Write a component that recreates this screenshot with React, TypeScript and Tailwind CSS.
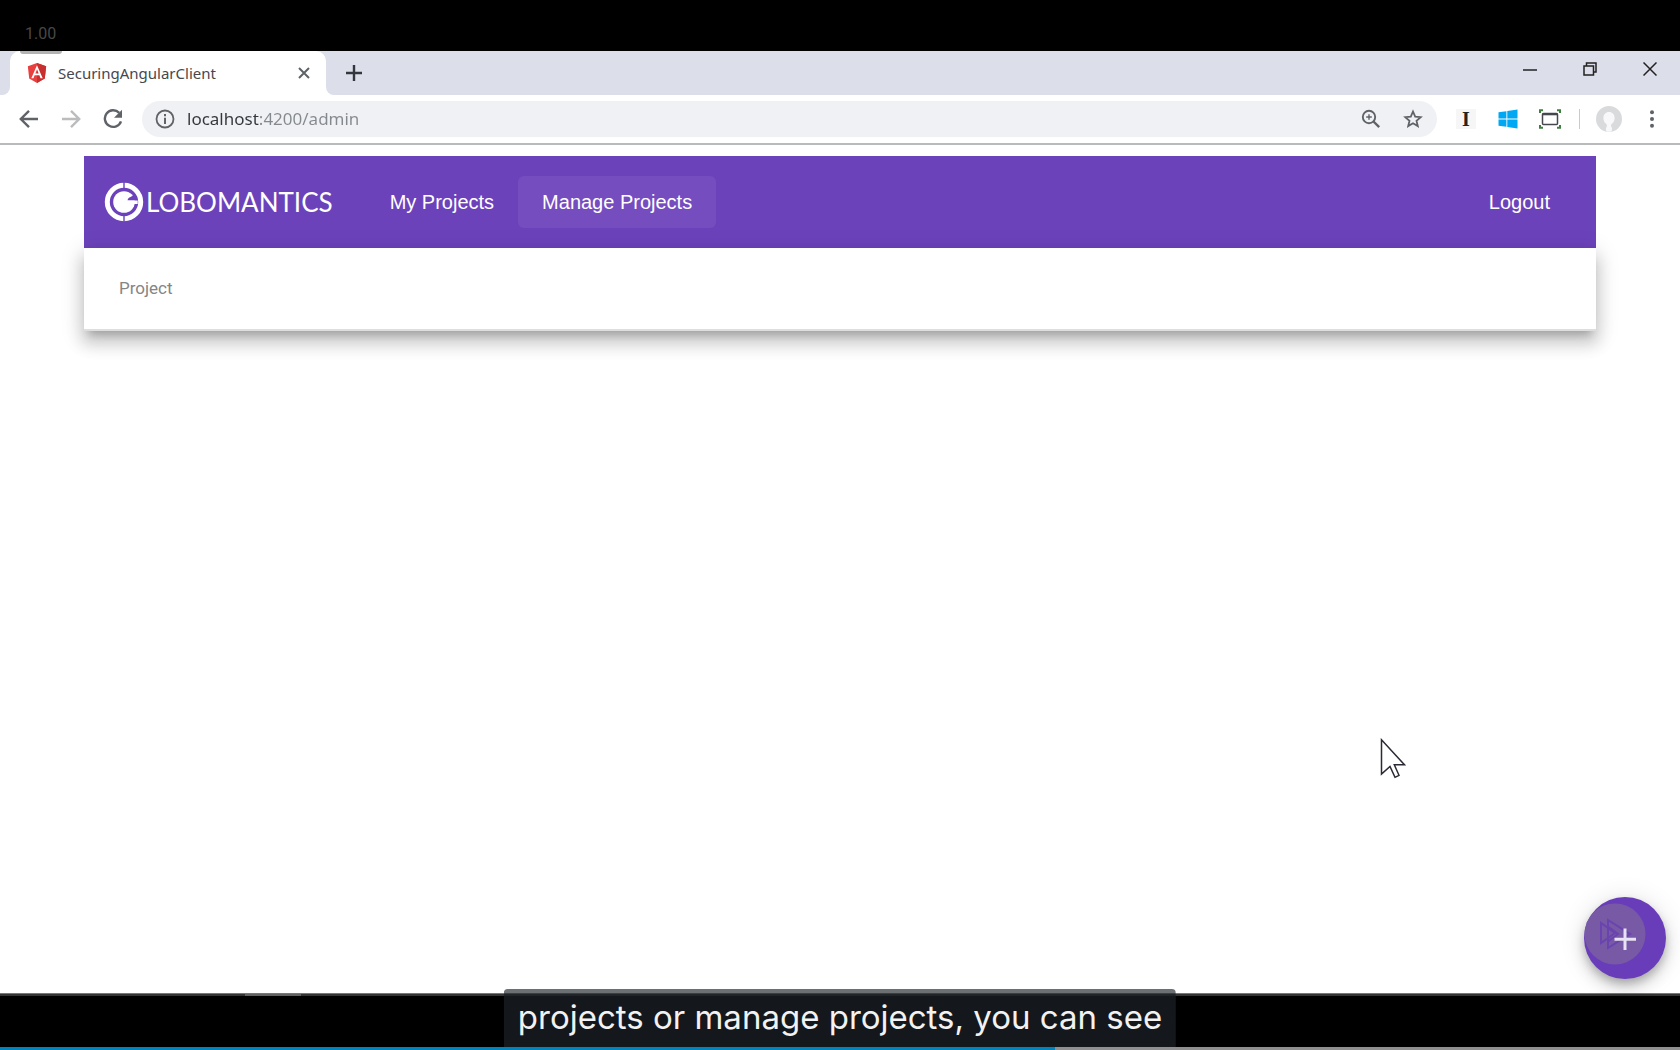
import React from "react";

function AngularLogo() {
  return (
    <svg viewBox="0 0 24 24" className="h-[22px] w-[22px]" aria-hidden="true">
      <path d="M12 1 22 4.600 20.500 18 12 23 3.500 18 2 4.600z" fill="#e8403f" />
      <path d="M12 1 22 4.600 20.500 18 12 23z" fill="#c8302f" />
      <path
        d="M12 3.600 5.800 17.600h2.400l1.200-3.100h5.200l1.200 3.100h2.400zM12 8l1.800 4.500h-3.600z"
        fill="#fff"
        fillRule="evenodd"
      />
    </svg>
  );
}

function BackIcon() {
  return (
    <svg viewBox="0 0 20 20" className="h-5 w-5" fill="none" stroke="currentColor" strokeWidth="2.400" aria-hidden="true">
      <path d="M19 10H2.500M10 1.800 1.800 10l8.200 8.200" />
    </svg>
  );
}

function ForwardIcon() {
  return (
    <svg viewBox="0 0 20 20" className="h-5 w-5" fill="none" stroke="currentColor" strokeWidth="2.400" aria-hidden="true">
      <path d="M1 10h16.500M10 1.800 18.200 10 10 18.200" />
    </svg>
  );
}

function ReloadIcon() {
  return (
    <svg viewBox="0 0 20 20" className="h-5 w-5" aria-hidden="true">
      <path
        d="M16.200 3.800A8.300 8.300 0 1 0 18 12.300"
        fill="none"
        stroke="currentColor"
        strokeWidth="2.400"
      />
      <path d="M19 0.800v8h-8z" fill="currentColor" />
    </svg>
  );
}

function InfoIcon() {
  return (
    <svg viewBox="0 0 20 20" className="h-5 w-5" aria-hidden="true">
      <circle cx="10" cy="10" r="8.500" fill="none" stroke="currentColor" strokeWidth="1.800" />
      <path d="M9 8.800h2V15H9zM9 5h2v2.200H9z" fill="currentColor" />
    </svg>
  );
}

function ZoomIcon() {
  return (
    <svg viewBox="0 0 20 20" className="h-5 w-5" fill="none" stroke="currentColor" aria-hidden="true">
      <circle cx="8" cy="8" r="6.200" strokeWidth="1.900" />
      <path d="m12.500 12.500 5.700 5.700" strokeWidth="2.400" />
      <path d="M8 5.200v5.600M5.200 8h5.600" strokeWidth="1.400" />
    </svg>
  );
}

function StarIcon() {
  return (
    <svg viewBox="0 0 20 20" className="h-5 w-5" fill="none" stroke="currentColor" strokeWidth="1.800" aria-hidden="true">
      <path d="m10 2.500 2.200 5.100 5.500.5-4.200 3.600 1.300 5.400L10 14.200l-4.800 2.900 1.300-5.400L2.300 8.100l5.500-.5z" />
    </svg>
  );
}

function WindowsIcon() {
  return (
    <svg viewBox="0 0 20 20" className="h-5 w-5" fill="#00a8f3" aria-hidden="true">
      <path d="M.5 3.300 8.400 2.200v7.300H.5zM9.300 2 19.500.5v9H9.300zM.5 10.400h7.900v7.400L.5 16.700zM9.300 10.400h10.200v9.100L9.300 18z" />
    </svg>
  );
}

function CaptureIcon() {
  return (
    <svg viewBox="0 0 22 20" className="h-5 w-[22px]" fill="none" aria-hidden="true">
      <path d="M1 4V1.200h3M18 1.200h3V4M21 16v2.800h-3M4 18.800H1V16" stroke="#3f7d41" strokeWidth="2" />
      <rect x="3.500" y="4.500" width="15" height="11" rx="1" stroke="#44474b" strokeWidth="1.500" />
      <path d="M3.500 5.200h15" stroke="#44474b" strokeWidth="2.200" />
    </svg>
  );
}

function AvatarIcon() {
  return (
    <svg viewBox="0 0 26 26" className="h-[26px] w-[26px]" aria-hidden="true">
      <circle cx="13" cy="13" r="13" fill="#d9dadc" />
      <path
        d="M13 6c3.400 0 5.600 2.500 5.600 6 0 3-1.300 4.700-3 6.100-.8.800-.7 2.300.1 3.400.8 1.200.2 4.300-1 4.300h-3.400c-1.200 0-1.800-3.100-1-4.300.8-1.100.9-2.600.1-3.400-1.700-1.400-3-3.100-3-6.100 0-3.500 2.200-6 5.600-6z"
        fill="#f8f8fb"
      />
    </svg>
  );
}

function GlobomanticsMark() {
  return (
    <svg viewBox="0 0 40 40" className="h-10 w-10" aria-hidden="true">
      <circle cx="20" cy="20" r="16.700" fill="none" stroke="#fff" strokeWidth="5" />
      <path d="M20 0v7M20 33v7" stroke="#6c42bb" strokeWidth="1.400" />
      <circle cx="20" cy="20" r="10.800" fill="#fff" />
      <path d="M33 18.500h-9.500c.3-1.700 1.300-2.900 3-3.400l2.500-1.600 3.500.5z" fill="#6c42bb" />
      <path d="M20 18.500h13.700v3.500H20z" fill="#fff" />
    </svg>
  );
}

function TabStrip() {
  return (
    <div className="flex h-11 bg-white">
      <div className="w-[10px] rounded-br-lg bg-[#dcdeea]" />
      <div className="relative flex w-[316px] bg-[#dcdeea]">
        <div className="flex flex-1 items-center rounded-t-[10px] bg-white pr-3 pl-4">
          <AngularLogo />
          <span className="ml-2.5 flex-1 text-[15px] text-[#45484d]">SecuringAngularClient</span>
          <button aria-label="Close tab" className="flex h-5 w-5 items-center justify-center text-[#5f6368]">
            <svg viewBox="0 0 12 12" className="h-3 w-3" stroke="currentColor" strokeWidth="2" aria-hidden="true">
              <path d="m1 1 10 10M11 1 1 11" />
            </svg>
          </button>
        </div>
        <div className="absolute top-0 left-2.5 h-[3px] w-[42px] rounded-b bg-[#b3b3b3]" />
      </div>
      <div className="flex flex-1 items-center rounded-bl-lg bg-[#dcdeea] text-[#33363b]">
        <button aria-label="New tab" className="ml-5 flex h-4 w-4 items-center justify-center">
          <svg viewBox="0 0 16 16" className="h-4 w-4" stroke="currentColor" strokeWidth="2.400" aria-hidden="true">
            <path d="M8 0v16M0 8h16" />
          </svg>
        </button>
        <div className="mb-2 ml-auto flex text-[#222]">
          <button aria-label="Minimize" className="flex h-8 w-[60px] items-center justify-center">
            <svg viewBox="0 0 14 14" className="h-3.5 w-3.5" stroke="currentColor" strokeWidth="1.500" aria-hidden="true">
              <path d="M0 8h14" />
            </svg>
          </button>
          <button aria-label="Restore" className="flex h-8 w-[60px] items-center justify-center">
            <svg viewBox="0 0 14 14" className="h-3.5 w-3.5" fill="none" stroke="currentColor" strokeWidth="1.500" aria-hidden="true">
              <path d="M1 4h9.500v9H1zM3.500 4V1H13v9h-2.500" />
            </svg>
          </button>
          <button aria-label="Close" className="flex h-8 w-[60px] items-center justify-center">
            <svg viewBox="0 0 14 14" className="h-3.5 w-3.5" stroke="currentColor" strokeWidth="1.500" aria-hidden="true">
              <path d="m.5.5 13 13M13.500.5l-13 13" />
            </svg>
          </button>
        </div>
      </div>
    </div>
  );
}

function Toolbar() {
  return (
    <div className="flex h-[50px] items-center border-b-2 border-[#b9babc] bg-white pr-[18px] pl-[19px] text-[#5f6368]">
      <div className="flex gap-[22px]">
        <button aria-label="Back"><BackIcon /></button>
        <button aria-label="Forward" className="text-[#babcbe]"><ForwardIcon /></button>
        <button aria-label="Reload"><ReloadIcon /></button>
      </div>
      <div className="ml-[19px] flex h-9 flex-1 items-center rounded-full bg-[#f0f1f5] pr-3.5 pl-[13px]">
        <button aria-label="Site information"><InfoIcon /></button>
        <input
          aria-label="Address"
          defaultValue="localhost:4200/admin"
          className="ml-3 min-w-0 flex-1 bg-linear-[90deg,#33363b_72px,#85898d_72px] bg-clip-text text-[17px] text-transparent outline-none"
        />
        <button aria-label="Zoom"><ZoomIcon /></button>
        <button aria-label="Bookmark" className="ml-[22px]"><StarIcon /></button>
      </div>
      <button
        aria-label="Instapaper"
        className="ml-[19px] flex h-5 w-5 items-center justify-center bg-[#f6f6f6] font-['Liberation_Serif',serif] text-xl font-bold text-[#222]"
      >
        I
      </button>
      <button aria-label="Windows" className="ml-[22px]"><WindowsIcon /></button>
      <button aria-label="Capture" className="ml-[21px]"><CaptureIcon /></button>
      <div className="ml-[18px] h-5 w-px bg-[#c8cacc]" />
      <button aria-label="Profile" className="ml-4"><AvatarIcon /></button>
      <button aria-label="Menu" className="ml-5 flex h-5 w-5 items-center justify-center">
        <svg viewBox="0 0 4 18" className="h-[18px] w-1" fill="currentColor" aria-hidden="true">
          <circle cx="2" cy="2.200" r="2" />
          <circle cx="2" cy="9" r="2" />
          <circle cx="2" cy="15.800" r="2" />
        </svg>
      </button>
    </div>
  );
}

function SiteNav() {
  return (
    <nav className="flex h-[92px] items-center bg-[#6c42bb] pr-[22px] pl-5 font-['Liberation_Sans',Arial,sans-serif] text-xl text-white">
      <a href="#home" className="flex items-center">
        <GlobomanticsMark />
        <span className="ml-0.5 font-['Lato',sans-serif] text-[26px] leading-8">LOBOMANTICS</span>
      </a>
      <a href="#projects" className="ml-[33px] rounded-md px-6 py-3">My Projects</a>
      <a href="#admin" aria-current="page" className="rounded-md bg-[#754dbf] px-6 py-3">Manage Projects</a>
      <a href="#logout" className="ml-auto rounded-md px-6 py-3">Logout</a>
    </nav>
  );
}

function AddButton() {
  return (
    <button
      aria-label="Add project"
      className="absolute right-3.5 bottom-3.5 h-[82px] w-[82px] rounded-full bg-[#693db9] shadow-[0_5px_8px_-1px_rgba(0,0,0,0.2),0_9px_15px_0_rgba(0,0,0,0.14),0_2px_27px_0_rgba(0,0,0,0.12)]"
    >
      <svg viewBox="0 0 82 82" className="h-[82px] w-[82px]" fill="none" aria-hidden="true">
        <circle cx="31" cy="37" r="30.500" fill="#7759a6" />
        <path d="M17 26v20l14-10zM24 23v28l22-14zM24 29.500v15l10-7.500z" stroke="#6a44ae" strokeWidth="2" />
        <path d="M41 31.500v21.500M30.500 42.300h21.500" stroke="#e9e2f4" strokeWidth="3" />
      </svg>
    </button>
  );
}

export default function App() {
  return (
    <div className="relative flex min-h-screen flex-col bg-black font-['Noto_Sans',sans-serif]">
      <header className="flex h-[51px] items-center px-[25px] pt-4 font-['Roboto',sans-serif] text-base text-[#484848]">
        1.00
      </header>
      <TabStrip />
      <Toolbar />
      <main className="relative flex-1 bg-white px-[5%] pt-[11px]">
        <SiteNav />
        <table className="w-full bg-white text-left shadow-[0_8px_8px_-5px_rgba(0,0,0,0.2),0_12px_15px_2px_rgba(0,0,0,0.14),0_5px_21px_3px_rgba(0,0,0,0.12)]">
          <thead>
            <tr className="h-[82px] border-b-2 border-[#dedede]">
              <th className="px-[35px] font-['Roboto',sans-serif] text-[17px] font-normal text-[#858585]">Project</th>
            </tr>
          </thead>
        </table>
        <svg
          viewBox="0 0 26 42"
          className="absolute right-[274px] bottom-[213px] h-[42px] w-[26px]"
          fill="#fff"
          stroke="#2b2933"
          strokeWidth="1.500"
          aria-hidden="true"
        >
          <path d="M1.500 1.800v34.200l8.500-7.500 5 10.800 4-2-4.700-10.500h10.200z" />
        </svg>
        <AddButton />
      </main>
      <footer>
        <div className="h-[3px] border-t border-[#777] bg-[#333]">
          <div className="ml-[245px] h-0.5 w-14 bg-[#616161]" />
        </div>
        <div className="h-[51px]" />
        <div role="progressbar" aria-label="Playback" aria-valuenow={63} className="h-[3px] bg-[#8f8f8f]">
          <div className="h-full w-[62.8%] bg-[#0084bd]" />
        </div>
      </footer>
      <div className="absolute bottom-[3px] left-1/2 h-[58px] -translate-x-1/2 rounded-t bg-[#181c21]/63 bg-[linear-gradient(#14171c00_7px,#14171c_7px)] px-3.5 pt-2 font-['Inter',sans-serif] text-[33px] leading-10 whitespace-nowrap text-[#f2f2f2]">
        projects or manage projects, you can see
      </div>
    </div>
  );
}
